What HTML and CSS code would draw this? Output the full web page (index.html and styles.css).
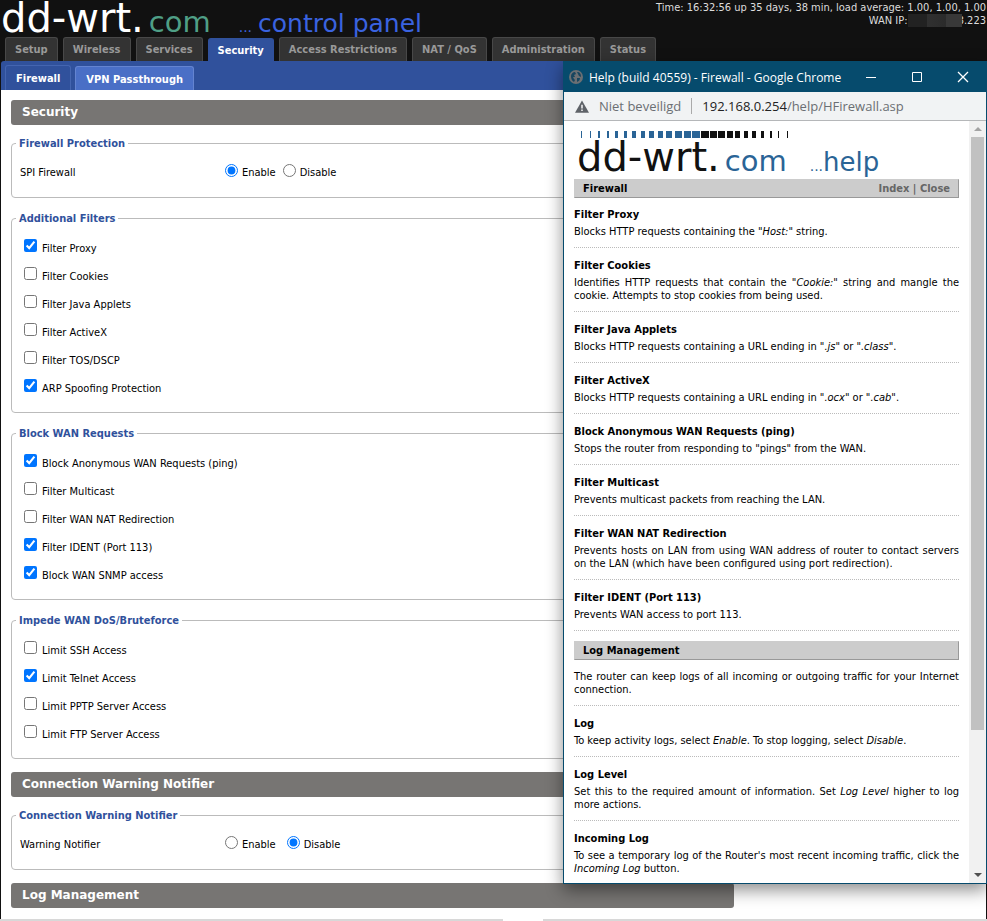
FILE: index.html
```html
<!DOCTYPE html>
<html lang="en">
<head>
    <meta charset="UTF-8">
    <meta name="viewport" content="width=device-width, initial-scale=1.0">
    <title>DD-WRT (build 40559) - Firewall</title>
    <link rel="stylesheet" href="styles.css">
</head>
<body>

    <div class="wrapper">
        <!-- Header -->
        <header class="header">
            <div class="top">
                <div class="logo">
                    <span class="logo-main">dd-wrt.</span><span class="logo-com">com</span>
                    <span class="logo-dots">...</span>
                    <span class="logo-panel">control panel</span>
                </div>
                <div class="info">
                    <div>Time: 16:32:56 up 35 days, 38 min, load average: 1.00, 1.00, 1.00</div>
                    <div>WAN IP: <span class="mask"></span>3.223</div>
                </div>
            </div>
            <nav class="menu">
                <a href="#">Setup</a>
                <a href="#">Wireless</a>
                <a href="#">Services</a>
                <a href="#" class="current">Security</a>
                <a href="#">Access Restrictions</a>
                <a href="#">NAT / QoS</a>
                <a href="#">Administration</a>
                <a href="#">Status</a>
            </nav>
            <nav class="submenu">
                <a href="#" class="current">Firewall</a>
                <a href="#">VPN Passthrough</a>
            </nav>
        </header>

        <!-- Settings form -->
        <main class="main">
            <form class="contents">
                <h2>Security</h2>
                <fieldset>
                    <legend>Firewall Protection</legend>
                    <div class="setting">
                        <div class="label">SPI Firewall</div>
                        <label><input type="radio" name="spi" checked> Enable</label>
                        <label><input type="radio" name="spi"> Disable</label>
                    </div>
                </fieldset>

                <fieldset>
                    <legend>Additional Filters</legend>
                    <label class="check"><input type="checkbox" checked> Filter Proxy</label>
                    <label class="check"><input type="checkbox"> Filter Cookies</label>
                    <label class="check"><input type="checkbox"> Filter Java Applets</label>
                    <label class="check"><input type="checkbox"> Filter ActiveX</label>
                    <label class="check"><input type="checkbox"> Filter TOS/DSCP</label>
                    <label class="check"><input type="checkbox" checked> ARP Spoofing Protection</label>
                </fieldset>

                <fieldset>
                    <legend>Block WAN Requests</legend>
                    <label class="check"><input type="checkbox" checked> Block Anonymous WAN Requests (ping)</label>
                    <label class="check"><input type="checkbox"> Filter Multicast</label>
                    <label class="check"><input type="checkbox"> Filter WAN NAT Redirection</label>
                    <label class="check"><input type="checkbox" checked> Filter IDENT (Port 113)</label>
                    <label class="check"><input type="checkbox" checked> Block WAN SNMP access</label>
                </fieldset>

                <fieldset>
                    <legend>Impede WAN DoS/Bruteforce</legend>
                    <label class="check"><input type="checkbox"> Limit SSH Access</label>
                    <label class="check"><input type="checkbox" checked> Limit Telnet Access</label>
                    <label class="check"><input type="checkbox"> Limit PPTP Server Access</label>
                    <label class="check"><input type="checkbox"> Limit FTP Server Access</label>
                </fieldset>

                <h2>Connection Warning Notifier</h2>
                <fieldset>
                    <legend>Connection Warning Notifier</legend>
                    <div class="setting spaced">
                        <div class="label">Warning Notifier</div>
                        <label><input type="radio" name="warn"> Enable</label>
                        <label><input type="radio" name="warn" checked> Disable</label>
                    </div>
                </fieldset>

                <h2>Log Management</h2>
            </form>
        </main>
    </div>
    <div class="bottom-edge"></div>

    <!-- Help window -->
    <section class="window">
        <div class="titlebar">
            <svg class="globe" viewBox="0 0 14 14" width="14" height="14">
                <circle cx="7" cy="7" r="7" fill="#6b6f73"/>
                <path d="M2 6C2 4 4 2 6 2L7 4L5 5L6 7L4 7L5 9L6 10L5 12C3 11 2 9 2 6Z M8 2C11 2 12 4 12 7L10 6L9 4Z M8 8L11 8C11 10 10 11 8 12Z" fill="#17455f"/>
            </svg>
            <span class="title">Help (build 40559) - Firewall - Google Chrome</span>
            <button type="button" aria-label="Minimize">
                <svg viewBox="0 0 12 12" width="12" height="12"><path d="M1 6.5H11" stroke="#fff"/></svg>
            </button>
            <button type="button" aria-label="Maximize">
                <svg viewBox="0 0 12 12" width="12" height="12"><path d="M1.500 1.500H10.500V10.500H1.500Z" stroke="#fff" fill="none"/></svg>
            </button>
            <button type="button" aria-label="Close">
                <svg viewBox="0 0 12 12" width="12" height="12"><path d="M1 1L11 11M11 1L1 11" stroke="#fff" stroke-width="1.300"/></svg>
            </button>
        </div>
        <div class="address">
            <svg viewBox="0 0 16 14" width="14" height="13">
                <path d="M8 0L16 14H0Z" fill="#5f6368"/>
                <path d="M7.200 5H8.800V9.300H7.200ZM7.200 10.500H8.800V12H7.200Z" fill="#fff"/>
            </svg>
            <span class="insecure">Niet beveiligd</span>
            <span class="url"><b>192.168.0.254</b>/help/HFirewall.asp</span>
        </div>
        <div class="view">
            <div class="help">
                <svg class="bars" viewBox="0 0 208 7" width="208" height="7">
                    <path fill="#2a6496" d="M0 0h1v7h-1zM9 0h1v7h-1zM17 0h2v7h-2zM26 0h2v7h-2zM34 0h3v7h-3zM43 0h3v7h-3zM51 0h4v7h-4zM60 0h4v7h-4zM68 0h5v7h-5zM77 0h5v7h-5zM85 0h6v7h-6zM94 0h7v7h-7zM103 0h7v7h-7zM111 0h8v7h-8z"/>
                    <path fill="#111" d="M120 0h8v7h-8zM129 0h7v7h-7zM137 0h7v7h-7zM146 0h6v7h-6zM154 0h5v7h-5zM163 0h4v7h-4zM171 0h4v7h-4zM180 0h3v7h-3zM189 0h2v7h-2zM197 0h1v7h-1zM206 0h1v7h-1z"/>
                </svg>
                <div class="logo logo-help">
                    <span class="logo-main">dd-wrt.</span><span class="logo-com">com</span>
                    <span class="logo-dots">...</span><span class="logo-word">help</span>
                </div>
                <div class="bar">
                    <span>Firewall</span>
                    <span class="links"><a href="#">Index</a> | <a href="#">Close</a></span>
                </div>
                <dl>
                    <dt>Filter Proxy</dt>
                    <dd>Blocks HTTP requests containing the "<i>Host:</i>" string.</dd>
                    <dt>Filter Cookies</dt>
                    <dd>Identifies HTTP requests that contain the "<i>Cookie:</i>" string and mangle the cookie. Attempts to stop cookies from being used.</dd>
                    <dt>Filter Java Applets</dt>
                    <dd>Blocks HTTP requests containing a URL ending in "<i>.js</i>" or "<i>.class</i>".</dd>
                    <dt>Filter ActiveX</dt>
                    <dd>Blocks HTTP requests containing a URL ending in "<i>.ocx</i>" or "<i>.cab</i>".</dd>
                    <dt>Block Anonymous WAN Requests (ping)</dt>
                    <dd>Stops the router from responding to "pings" from the WAN.</dd>
                    <dt>Filter Multicast</dt>
                    <dd>Prevents multicast packets from reaching the LAN.</dd>
                    <dt>Filter WAN NAT Redirection</dt>
                    <dd>Prevents hosts on LAN from using WAN address of router to contact servers on the LAN (which have been configured using port redirection).</dd>
                    <dt>Filter IDENT (Port 113)</dt>
                    <dd>Prevents WAN access to port 113.</dd>
                </dl>
                <div class="bar"><span>Log Management</span></div>
                <dl>
                    <dd>The router can keep logs of all incoming or outgoing traffic for your Internet connection.</dd>
                    <dt>Log</dt>
                    <dd>To keep activity logs, select <i>Enable</i>. To stop logging, select <i>Disable</i>.</dd>
                    <dt>Log Level</dt>
                    <dd>Set this to the required amount of information. Set <i>Log Level</i> higher to log more actions.</dd>
                    <dt>Incoming Log</dt>
                    <dd>To see a temporary log of the Router's most recent incoming traffic, click the <i>Incoming Log</i> button.</dd>
                </dl>
            </div>
            <div class="scrollbar">
                <span class="arrow up"></span>
                <span class="thumb"></span>
                <span class="arrow down"></span>
            </div>
        </div>
    </section>

</body>
</html>
```
FILE: styles.css
```css
* {
    box-sizing: border-box;
}

body {
    margin: 0;
    min-height: 100vh;
    position: relative;
    display: flex;
    flex-direction: column;
    overflow: hidden;
    background-color: #fff;
    color: #000;
    font-family: "DejaVu Sans Condensed", "DejaVu Sans", Tahoma, sans-serif;
    font-stretch: condensed;
    font-size: 11px;
    line-height: 13px;
}

a {
    text-decoration: none;
}

.wrapper {
    flex: 1;
    border-left: 1px solid #111;
    border-right: 1px solid #111;
}

/* header */
.header {
    background-color: #111;
}

.top {
    display: flex;
    justify-content: space-between;
    height: 37px;
}

.logo {
    font-family: "DejaVu Sans", sans-serif;
    font-stretch: normal;
    font-weight: 400;
    line-height: 36px;
    white-space: nowrap;
    display: flex;
    align-items: baseline;
}

.logo-main {
    font-size: 40px;
    color: #fff;
}

.logo-com {
    margin-left: 5px;
    font-size: 29px;
    color: #4f9f86;
}

.logo-dots {
    font-size: 14px;
    margin-left: 28px;
    color: #3a63e0;
}

.logo-panel {
    font-size: 25px;
    margin-left: 6px;
    color: #3a63e0;
}

.info {
    padding-top: 1px;
    color: #ddd;
    text-align: right;
    white-space: nowrap;
}

.mask {
    display: inline-block;
    position: relative;
    width: 54px;
    height: 13px;
    margin: 0 -4px 0 -3px;
    vertical-align: top;
    background: linear-gradient(90deg, #222 35%, #303030 35%, #2b2b2b 70%, #383838 70%);
}

.menu {
    display: flex;
    align-items: flex-end;
    gap: 5px;
    padding-left: 4px;
}

.menu a {
    height: 24px;
    padding: 0 9px;
    border: 1px solid #484848;
    border-bottom: none;
    border-radius: 3px 3px 0 0;
    background-color: #333;
    color: #999;
    font-weight: bold;
    line-height: 24px;
    white-space: nowrap;
}

.menu a.current {
    height: 23px;
    border-color: #30519c;
    background-color: #30519c;
    color: #fff;
}

.submenu {
    display: flex;
    align-items: flex-end;
    gap: 4px;
    height: 29px;
    padding-left: 4px;
    background-color: #30519c;
    border-radius: 3px 0 0 0;
}

.submenu a {
    height: 24px;
    padding: 0 10px;
    border: 1px solid #6484d0;
    border-bottom: none;
    border-radius: 3px 3px 0 0;
    background-color: #4a6fc6;
    color: #fff;
    font-weight: bold;
    line-height: 25px;
    white-space: nowrap;
}

.submenu a.current {
    height: 25px;
    border-color: #4465b0;
    background-color: #30519c;
}

/* settings */
.main {
    padding: 10px 10px 11px;
}

.contents {
    width: 75%;
    max-width: 723px;
}

h2 {
    margin: 13px 0 12px;
    padding-left: 11px;
    border-radius: 3px;
    background-color: #777573;
    color: #fff;
    font-family: "DejaVu Sans", sans-serif;
    font-stretch: normal;
    font-size: 12px;
    line-height: 25px;
}

h2:first-child {
    margin-top: 0;
}

h2:last-child {
    margin-bottom: 0;
}

fieldset {
    margin: 0;
    padding: 8px 4px 11px;
    border: 1px solid #bbb;
    border-radius: 4px;
}

fieldset + fieldset {
    margin-top: 14px;
}

legend {
    padding: 0 3px;
    color: #30519c;
    font-weight: bold;
}

.setting,
.check {
    display: flex;
    align-items: center;
    height: 28px;
}

.setting label {
    display: flex;
    align-items: center;
    margin-right: 7px;
}

.setting.spaced label {
    margin-right: 11px;
}

.label {
    width: 209px;
    padding-left: 4px;
}

input {
    width: 13px;
    height: 13px;
    margin: 0 4px 4px 0;
}

.check {
    padding: 2px 0 0 8px;
}

.check input {
    margin: 0 5px 6px 0;
}

.bottom-edge {
    height: 2px;
    background: linear-gradient(90deg, #d8d8d8 51%, #fff 51%, #fff 55%, #d8d8d8 55%);
}

/* help window */
.window {
    position: absolute;
    top: 61px;
    right: 0;
    bottom: 37px;
    width: 424px;
    display: flex;
    flex-direction: column;
    border: 1px solid #064b6d;
    background-color: #fff;
    box-shadow: 0 6px 16px rgba(0, 0, 0, 0.45);
}

.titlebar {
    display: flex;
    align-items: center;
    height: 30px;
    flex-shrink: 0;
    padding-left: 5px;
    background-color: #064b6d;
    color: #fff;
    font-family: "Open Sans", sans-serif;
    font-size: 12px;
    font-stretch: normal;
}

.title {
    flex: 1;
    margin-left: 6px;
    white-space: nowrap;
}

.titlebar button {
    display: flex;
    align-items: center;
    justify-content: center;
    width: 46px;
    height: 30px;
    padding: 0;
    border: none;
    background: none;
    cursor: pointer;
}

.address {
    display: flex;
    align-items: center;
    height: 29px;
    flex-shrink: 0;
    padding-left: 11px;
    border-bottom: 1px solid #b5b7b9;
    background-color: #f1f3f4;
    color: #6b6f73;
    font-family: "Open Sans", sans-serif;
    font-size: 13px;
    font-stretch: normal;
}

.insecure {
    margin-left: 10px;
    padding-right: 10px;
    border-right: 1px solid #aaa;
    line-height: 16px;
}

.url {
    margin-left: 10px;
}

.url b {
    color: #222;
    font-weight: normal;
}

.view {
    flex: 1;
    display: flex;
    min-height: 0;
    overflow: hidden;
}

.help {
    flex: 1;
    padding: 10px 10px 0;
    overflow: hidden;
}

.bars {
    display: block;
    margin-left: 7px;
}

.logo-help {
    height: 41px;
    margin-left: 3px;
    line-height: 38px;
}

.logo-help .logo-main {
    color: #111;
}

.logo-help .logo-com,
.logo-help .logo-dots,
.logo-help .logo-word {
    color: #2a6496;
}

.logo-help .logo-dots {
    margin-left: 23px;
}

.logo-word {
    font-size: 26px;
}

.bar {
    display: flex;
    justify-content: space-between;
    height: 19px;
    padding: 0 8px;
    border: 1px solid #999;
    border-top-color: #ccc;
    border-left-color: #ccc;
    background-color: #ccc;
    font-weight: bold;
    line-height: 17px;
}

.links,
.links a {
    color: #666;
}

dl {
    margin: 10px 0;
}

dt {
    margin-bottom: 4px;
    font-weight: bold;
}

dd {
    margin: 0 0 11px;
    padding-bottom: 9px;
    border-bottom: 1px dotted #bbb;
    text-align: justify;
}

dd:last-child {
    margin-bottom: 0;
}

.scrollbar {
    display: flex;
    flex-direction: column;
    align-items: center;
    width: 17px;
    padding: 6px 0;
    background-color: #f1f1f1;
}

.thumb {
    width: 13px;
    height: 79%;
    margin: 6px 0 auto;
    background-color: #c1c1c1;
}

.arrow {
    border: 4px solid transparent;
}

.up {
    border-top: none;
    border-bottom-color: #a3a3a3;
}

.down {
    border-bottom: none;
    border-top-color: #505050;
}
```
